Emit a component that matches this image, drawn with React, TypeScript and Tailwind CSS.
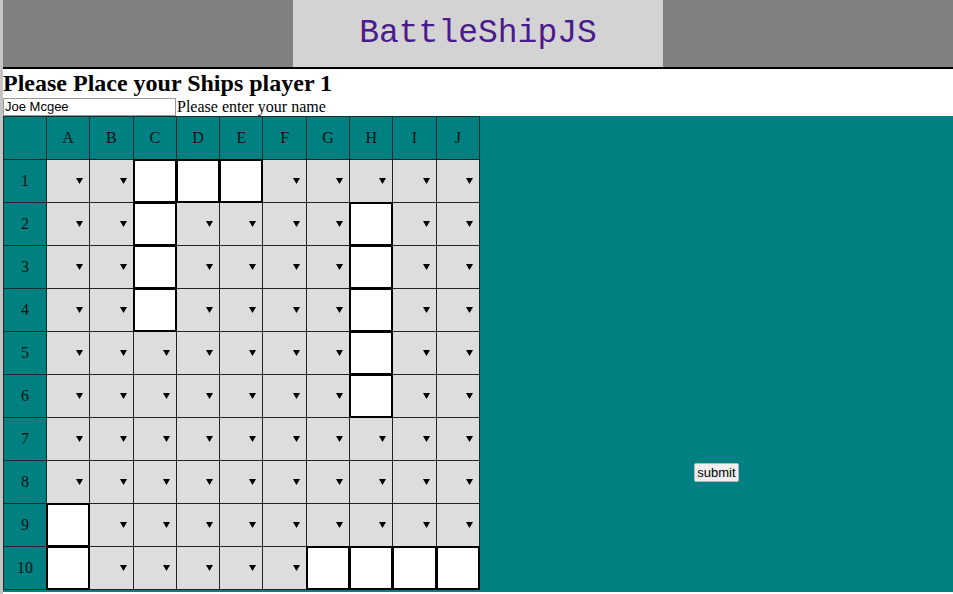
import React from "react";

const COLS = ["A", "B", "C", "D", "E", "F", "G", "H", "I", "J"];

// placed ship cells, "row-col"
const SHIPS = new Set([
  "1-2", "1-3", "1-4",
  "2-2", "2-7",
  "3-2", "3-7",
  "4-2", "4-7",
  "5-7",
  "6-7",
  "9-0",
  "10-0", "10-6", "10-7", "10-8", "10-9",
]);

const Arrow = () => (
  <svg width="7" height="6" viewBox="0 0 7 6" className="block">
    <path d="M0 0 L7 0 L3.5 6 Z" fill="#000" />
  </svg>
);

const HeadCell = ({ label }: { label: string }) => (
  <div className="border-r border-b border-[#1b2b2b] flex items-center justify-center text-[16px] text-[#111]">
    {label}
  </div>
);

const Cell = ({ ship }: { ship: boolean }) =>
  ship ? (
    <div className="w-[calc(100%+1px)] h-[44px] bg-white border-2 border-black -ml-px -mt-px" />
  ) : (
    <div className="bg-[#dddddd] border-r border-b border-[#222] flex items-center justify-end pr-[6px]">
      <Arrow />
    </div>
  );

export default function App() {
  return (
    <div className="min-h-[594px] border-l-[3px] border-[#c4c4c4] bg-white" style={{ fontFamily: '"Liberation Serif", serif' }}>
      {/* header */}
      <div className="h-[69px] bg-[#808080] border-b-2 border-black flex justify-center">
        <div className="w-[370px] bg-[#d3d3d3] flex items-center justify-center">
          <span className="text-[33px] text-[#4b1a8c]" style={{ fontFamily: '"Liberation Mono", monospace' }}>
            BattleShipJS
          </span>
        </div>
      </div>

      <h2 className="text-[24px] font-bold leading-[28px] text-black">Please Place your Ships player 1</h2>
      <div className="flex items-center h-[19px]">
        <input
          defaultValue="Joe Mcgee"
          className="w-[173px] h-[18px] border border-[#9a9a9a] px-[1px] text-[13px] text-black outline-none"
          style={{ fontFamily: '"Liberation Sans", sans-serif' }}
        />
        <span className="text-[16px] ml-[1px] leading-[19px]">Please enter your name</span>
      </div>

      {/* board */}
      <div className="bg-[#008080] flex pb-[2px]">
        <div className="grid grid-cols-[43px_repeat(10,43.3px)] auto-rows-[43px] border-l border-t border-[#1b2b2b] h-fit">
          <HeadCell label="" />
          {COLS.map((c) => (
            <HeadCell key={c} label={c} />
          ))}
          {Array.from({ length: 10 }, (_, r) => (
            <React.Fragment key={r}>
              <HeadCell label={String(r + 1)} />
              {COLS.map((c, ci) => (
                <Cell key={c} ship={SHIPS.has(`${r + 1}-${ci}`)} />
              ))}
            </React.Fragment>
          ))}
        </div>
        <div className="flex-1 flex justify-center items-start pt-[347px]">
          <button
            className="h-[19px] px-[2px] bg-[#efefef] border border-[#b5b5b5] text-[13px] leading-[15px] text-black rounded-[2px]"
            style={{ fontFamily: '"Liberation Sans", sans-serif' }}
          >
            submit
          </button>
        </div>
      </div>
    </div>
  );
}
